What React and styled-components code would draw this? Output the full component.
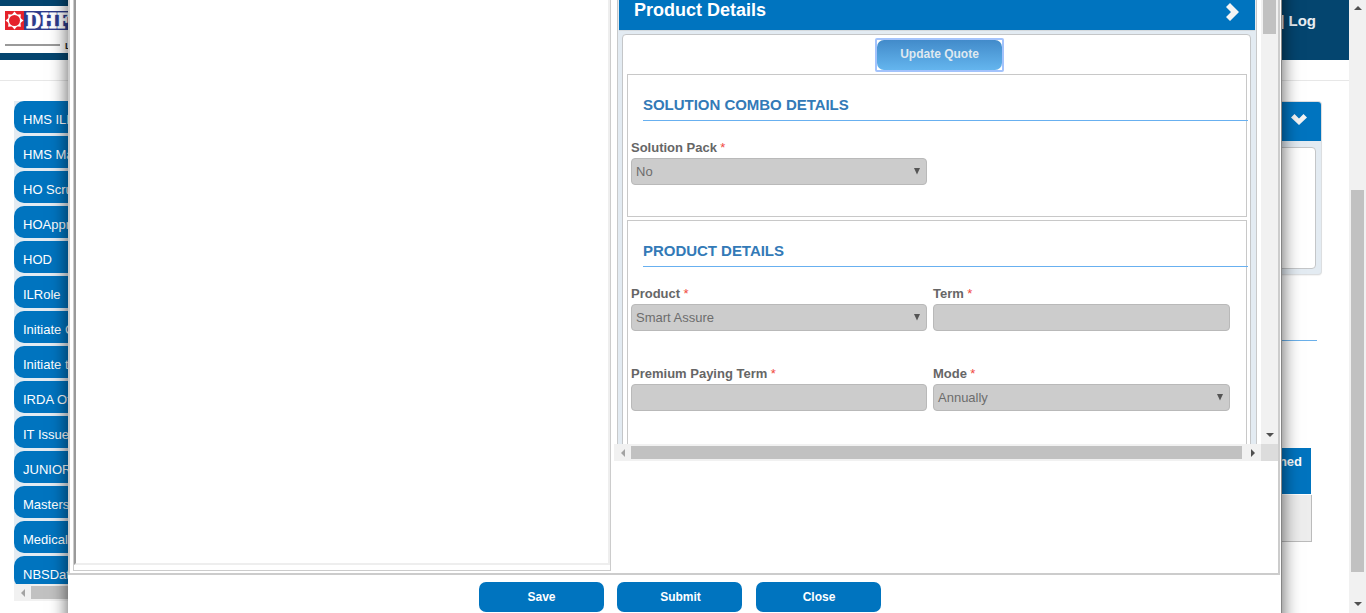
import React from 'react';
import styled, { createGlobalStyle } from 'styled-components';

const Global = createGlobalStyle`
  *, *::before, *::after { box-sizing: border-box; }
  html, body { margin: 0; padding: 0; overflow: hidden; background: #fff; }
  body { font-family: "Liberation Sans", Arial, sans-serif; font-size: 13px; color: #666; }
  h2, h3, p { margin: 0; }
`;

const Screen = styled.div`
  position: relative;
  display: flex;
  width: 1366px;
  height: 613px;
  overflow: hidden;
`;

const Page = styled.div`
  width: 1349px;
  display: flex;
  flex-direction: column;
`;

const TopBar = styled.header`
  display: flex;
  align-items: flex-start;
  justify-content: space-between;
  height: 60px;
  padding-top: 6px;
  background: #04456f;
`;

const LogoBox = styled.div`
  width: 200px;
  height: 47px;
  background: #fff;
`;

const UserLinks = styled.div`
  padding: 6px 33px 0 0;
  font-size: 15px;
  line-height: 17px;
  font-weight: bold;
  color: #e9eef2;
`;

const Columns = styled.div`
  display: flex;
  justify-content: space-between;
  margin-top: 20px;
  border-top: 1px solid #e7e7e7;
  padding: 20px 28px 0 14px;
`;

const Sidebar = styled.nav`
  width: 180px;
  height: 500px;
  overflow: hidden;
`;

const MenuList = styled.div`
  display: flex;
  flex-direction: column;
  gap: 3px;
  height: 483px;
  overflow: hidden;
  background: #e3ebf2;
`;

const MenuItem = styled.a`
  flex: none;
  height: 32px;
  padding-left: 9px;
  border-radius: 10px 0 0 10px;
  background: #0074bf;
  color: #fff;
  line-height: 37px;
  white-space: nowrap;
`;

const RightColumn = styled.div`
  width: 300px;
`;

const SidePanel = styled.section`
  width: 286px;
  height: 174px;
  margin-left: 15px;
  padding: 0 5px 5px 0;
  border: 1px solid #dcdee0;
  border-left: 0;
  border-radius: 4px;
  background: #e3ebf2;
  box-shadow: 0 1px 1px rgba(0, 0, 0, 0.05);
`;

const SidePanelHead = styled.div`
  display: flex;
  justify-content: flex-end;
  height: 39px;
  margin-right: -5px;
  padding: 12px 14px 0 0;
  border-radius: 0 3px 0 0;
  background: #0074bf;
`;

const SidePanelBody = styled.div`
  height: 122px;
  margin-top: 6px;
  border: 1px solid #c4c6c8;
  border-radius: 4px;
  background: #fff;
`;

const SideRule = styled.div`
  height: 1px;
  margin: 65px 4px 0 0;
  background: #6bb0ea;
`;

const SideTable = styled.div`
  width: 291px;
  margin-top: 107px;
`;

const SideTh = styled.div`
  height: 46px;
  width: 290px;
  padding: 6px 9px 0 0;
  background: #0074bf;
  color: #fff;
  font-weight: bold;
  line-height: 16px;
  text-align: right;
`;

const SideTd = styled.div`
  height: 47px;
  margin-top: 1px;
  border: solid #bbb;
  border-width: 0 1px 1px 0;
  background: #ededed;
`;

const VBar = styled.div`
  flex: none;
  display: flex;
  flex-direction: column;
  align-items: center;
  width: 17px;
  height: ${(p) => p.$height}px;
  background: #f1f1f1;
`;

const HBar = styled.div`
  flex: none;
  display: flex;
  align-items: center;
  width: ${(p) => p.$width}px;
  height: 17px;
  background: #f1f1f1;
`;

const VThumb = styled.div`
  width: 13px;
  height: ${(p) => p.$size}px;
  margin: ${(p) => p.$before}px 0 auto;
  background: #c1c1c1;
`;

const HThumb = styled.div`
  width: ${(p) => p.$size}px;
  height: 13px;
  margin-right: auto;
  background: #c1c1c1;
`;

const ArrowCell = styled.span`
  flex: none;
  display: flex;
  align-items: center;
  justify-content: center;
  width: 17px;
  height: 17px;
  padding: ${(p) => (p.$vertical ? '0 0 1px' : '1px 0 0')};
`;

const Modal = styled.div`
  position: absolute;
  left: 68px;
  top: -30px;
  width: 1214px;
  height: 700px;
  padding-top: 30px;
  border-right: 1px solid #858585;
  background: #fff;
  box-shadow: 0 0 17px rgba(0, 0, 0, 0.65);
`;

const ModalBody = styled.div`
  display: flex;
  width: 1212px;
  height: 575px;
  padding-left: 3px;
  border: 2px solid #ccc;
  border-top: 0;
`;

const PreviewCell = styled.div`
  width: 538px;
  height: 571px;
  border: 1px solid #ccc;
  border-top: 0;
`;

const PreviewFrame = styled.div`
  height: 565px;
  border: solid;
  border-width: 0 2px 2px;
  border-color: #eee #eee #eee #9a9a9a;
`;

const FormFrame = styled.div`
  display: flex;
  flex-direction: column;
  width: 664px;
  height: 461px;
  margin-left: 3px;
`;

const FrameTop = styled.div`
  display: flex;
  height: 444px;
`;

const FrameBottom = styled.div`
  display: flex;
  height: 17px;
`;

const Corner = styled.div`
  width: 17px;
  height: 17px;
  background: #dcdcdc;
`;

const Viewport = styled.div`
  width: 647px;
  height: 444px;
  padding-left: 3px;
  overflow: hidden;
`;

const Panel = styled.section`
  width: 640px;
  height: 500px;
  padding: 0 5px 0 4px;
  border: solid #c8c9ca;
  border-width: 0 1px;
  background: #e3ebf2;
`;

const PanelHead = styled.div`
  display: flex;
  justify-content: space-between;
  height: 31px;
  margin: 0 -4px 0 -3px;
  padding: 0 16px 0 15px;
  border-bottom: 1px solid #d5dade;
  background: #0074bf;
`;

const PanelTitle = styled.h2`
  color: #fff;
  font-size: 18px;
  line-height: 20px;
`;

const PanelBody = styled.div`
  height: 480px;
  margin-top: 3px;
  padding: 3px 3px 0 4px;
  border: 1px solid #c4c6c8;
  border-radius: 4px 4px 0 0;
  background: #fff;
`;

const QuoteRow = styled.div`
  display: flex;
  height: 36px;
  padding-left: 248px;
`;

const UpdateButton = styled.button`
  display: block;
  width: 125px;
  height: 30px;
  padding: 0 0 3px;
  border: 0;
  border-radius: 7px;
  background: linear-gradient(#428bca, #64b5ee);
  color: #dfe8f0;
  font: bold 12px "Liberation Sans", Arial, sans-serif;
`;

const FocusRing = styled.div`
  width: 129px;
  height: 34px;
  border: 2px solid #a3c3fc;
  border-radius: 2px;
`;

const Group = styled.section`
  width: 620px;
  height: ${(p) => p.$height}px;
  margin-bottom: 3px;
  padding: 18px 0 0 3px;
  border: 1px solid #c8c8c8;
`;

const GroupTitle = styled.h3`
  width: 605px;
  height: 28px;
  margin: 0 0 17px 12px;
  border-bottom: 1px solid #68b0f0;
  color: #337ab7;
  font-size: 15px;
  line-height: 23px;
  letter-spacing: -0.03px;
`;

const Fields = styled.div`
  display: grid;
  grid-template-columns: 296px 297px;
  column-gap: 6px;
  grid-auto-rows: 80px;
`;

const Label = styled.label`
  display: block;
  height: 20px;
  font-size: 13px;
  font-weight: bold;
  line-height: 19px;
  color: #666;
`;

const Star = styled.span`
  margin-left: -0.3px;
  color: #f0483e;
  font-weight: normal;
`;

const Control = styled.div`
  display: flex;
  align-items: center;
  justify-content: space-between;
  height: 27px;
  padding: 0 5px 0 4px;
  border: 1px solid #b9b9b9;
  border-radius: 4px;
  background: #ccc;
  color: #6c6c6c;
  line-height: 25px;
`;

const Actions = styled.div`
  display: flex;
  padding: 7px 0 0 411px;
`;

const ActionButton = styled.button`
  width: 125px;
  height: 30px;
  margin-right: ${(p) => p.$gap || 0}px;
  padding: 0 0 0 ${(p) => p.$nudge || 0}px;
  border: 0;
  border-radius: 7px;
  background: #0074bf;
  color: #fff;
  font: bold 12px "Liberation Sans", Arial, sans-serif;
`;

const shapes = {
  up: '0,4 4,0 8,4',
  down: '0,0 8,0 4,4',
  left: '4,0 4,8 0,4',
  right: '0,0 4,4 0,8',
};

function Arrow({ dir, muted }) {
  const vertical = dir === 'up' || dir === 'down';
  return (
    <ArrowCell $vertical={vertical}>
      <svg width={vertical ? 8 : 4} height={vertical ? 4 : 8}>
        <polygon points={shapes[dir]} fill={muted ? '#a3a3a3' : '#505050'} />
      </svg>
    </ArrowCell>
  );
}

function Logo() {
  const rays = [0, 45, 90, 135, 180, 225, 270, 315];
  return (
    <svg width="120" height="47" viewBox="0 6 120 47">
      <rect x="5" y="11" width="110" height="19" fill="#2e3c8c" />
      <rect x="5" y="11" width="19" height="19" fill="#e5222b" />
      {rays.map((r) => (
        <polygon key={r} points="14.5,11.5 17.8,15.5 11.2,15.5" fill="#fff" transform={`rotate(${r} 14.5 20.5)`} />
      ))}
      <circle cx="14.5" cy="20.5" r="6.5" fill="#fff" />
      <circle cx="14.5" cy="20.5" r="5.5" fill="#e5222b" />
      <text x="26" y="27.5" fill="#fff" stroke="#fff" strokeWidth="1.1" fontFamily="DejaVu Serif, serif" fontWeight="bold" fontSize="20" textLength="55" lengthAdjust="spacingAndGlyphs">DHFL</text>
      <rect x="5" y="44" width="55" height="2" fill="#999" />
      <text x="65" y="48.5" fill="#222" fontFamily="Liberation Sans, sans-serif" fontWeight="bold" fontSize="9">Life</text>
    </svg>
  );
}

function Field({ label, value }) {
  return (
    <div>
      <Label>{label} <Star>*</Star></Label>
      <Control>
        <span>{value}</span>
        {value && (
          <svg width="8" height="7" viewBox="0 0 8 7"><polygon points="1,0 7,0 4,6.5" fill="#555" /></svg>
        )}
      </Control>
    </div>
  );
}

const menu = [
  'HMS ILRole', 'HMS Maker', 'HO Scrutiny', 'HOApprover', 'HOD', 'ILRole', 'Initiate Claim',
  'Initiate task', 'IRDA Officer', 'IT Issues', 'JUNIOR', 'Masters', 'Medical', 'NBSData',
];

export default function App() {
  return (
    <Screen>
      <Global />
      <Page>
        <TopBar>
          <LogoBox><Logo /></LogoBox>
          <UserLinks>| Log</UserLinks>
        </TopBar>
        <Columns>
          <Sidebar>
            <MenuList>
              {menu.map((m) => <MenuItem key={m}>{m}</MenuItem>)}
            </MenuList>
            <HBar $width={180}><Arrow dir="left" muted /><HThumb $size={140} /></HBar>
          </Sidebar>
          <RightColumn>
            <SidePanel>
              <SidePanelHead>
                <svg width="16" height="11"><polygon points="0,3.5 3.5,0 8,4.5 12.5,0 16,3.5 8,11" fill="#f4f4f4" /></svg>
              </SidePanelHead>
              <SidePanelBody />
            </SidePanel>
            <SideRule />
            <SideTable>
              <SideTh>Assigned</SideTh>
              <SideTd />
            </SideTable>
          </RightColumn>
        </Columns>
      </Page>
      <VBar $height={613}>
        <Arrow dir="up" />
        <VThumb $before={173} $size={382} />
        <Arrow dir="down" />
      </VBar>

      <Modal>
        <ModalBody>
          <PreviewCell><PreviewFrame /></PreviewCell>
          <FormFrame>
            <FrameTop>
              <Viewport>
                <Panel>
                  <PanelHead>
                    <PanelTitle>Product Details</PanelTitle>
                    <svg width="13" height="22"><polygon points="0,7 4,3 13,12 4,21 0,17 5,12" fill="#f4f4f4" /></svg>
                  </PanelHead>
                  <PanelBody>
                    <QuoteRow>
                      <FocusRing><UpdateButton>Update Quote</UpdateButton></FocusRing>
                    </QuoteRow>
                    <Group $height={143}>
                      <GroupTitle>SOLUTION COMBO DETAILS</GroupTitle>
                      <Fields><Field label="Solution Pack" value="No" /></Fields>
                    </Group>
                    <Group $height={290}>
                      <GroupTitle>PRODUCT DETAILS</GroupTitle>
                      <Fields>
                        <Field label="Product" value="Smart Assure" />
                        <Field label="Term" />
                        <Field label="Premium Paying Term" />
                        <Field label="Mode" value="Annually" />
                      </Fields>
                    </Group>
                  </PanelBody>
                </Panel>
              </Viewport>
              <VBar $height={444}>
                <VThumb $before={0} $size={34} />
                <Arrow dir="down" />
              </VBar>
            </FrameTop>
            <FrameBottom>
              <HBar $width={647}>
                <Arrow dir="left" muted />
                <HThumb $size={611} />
                <Arrow dir="right" />
              </HBar>
              <Corner />
            </FrameBottom>
          </FormFrame>
        </ModalBody>
        <Actions>
          <ActionButton $gap={13}>Save</ActionButton>
          <ActionButton $gap={14} $nudge={2}>Submit</ActionButton>
          <ActionButton $nudge={1}>Close</ActionButton>
        </Actions>
      </Modal>
    </Screen>
  );
}
